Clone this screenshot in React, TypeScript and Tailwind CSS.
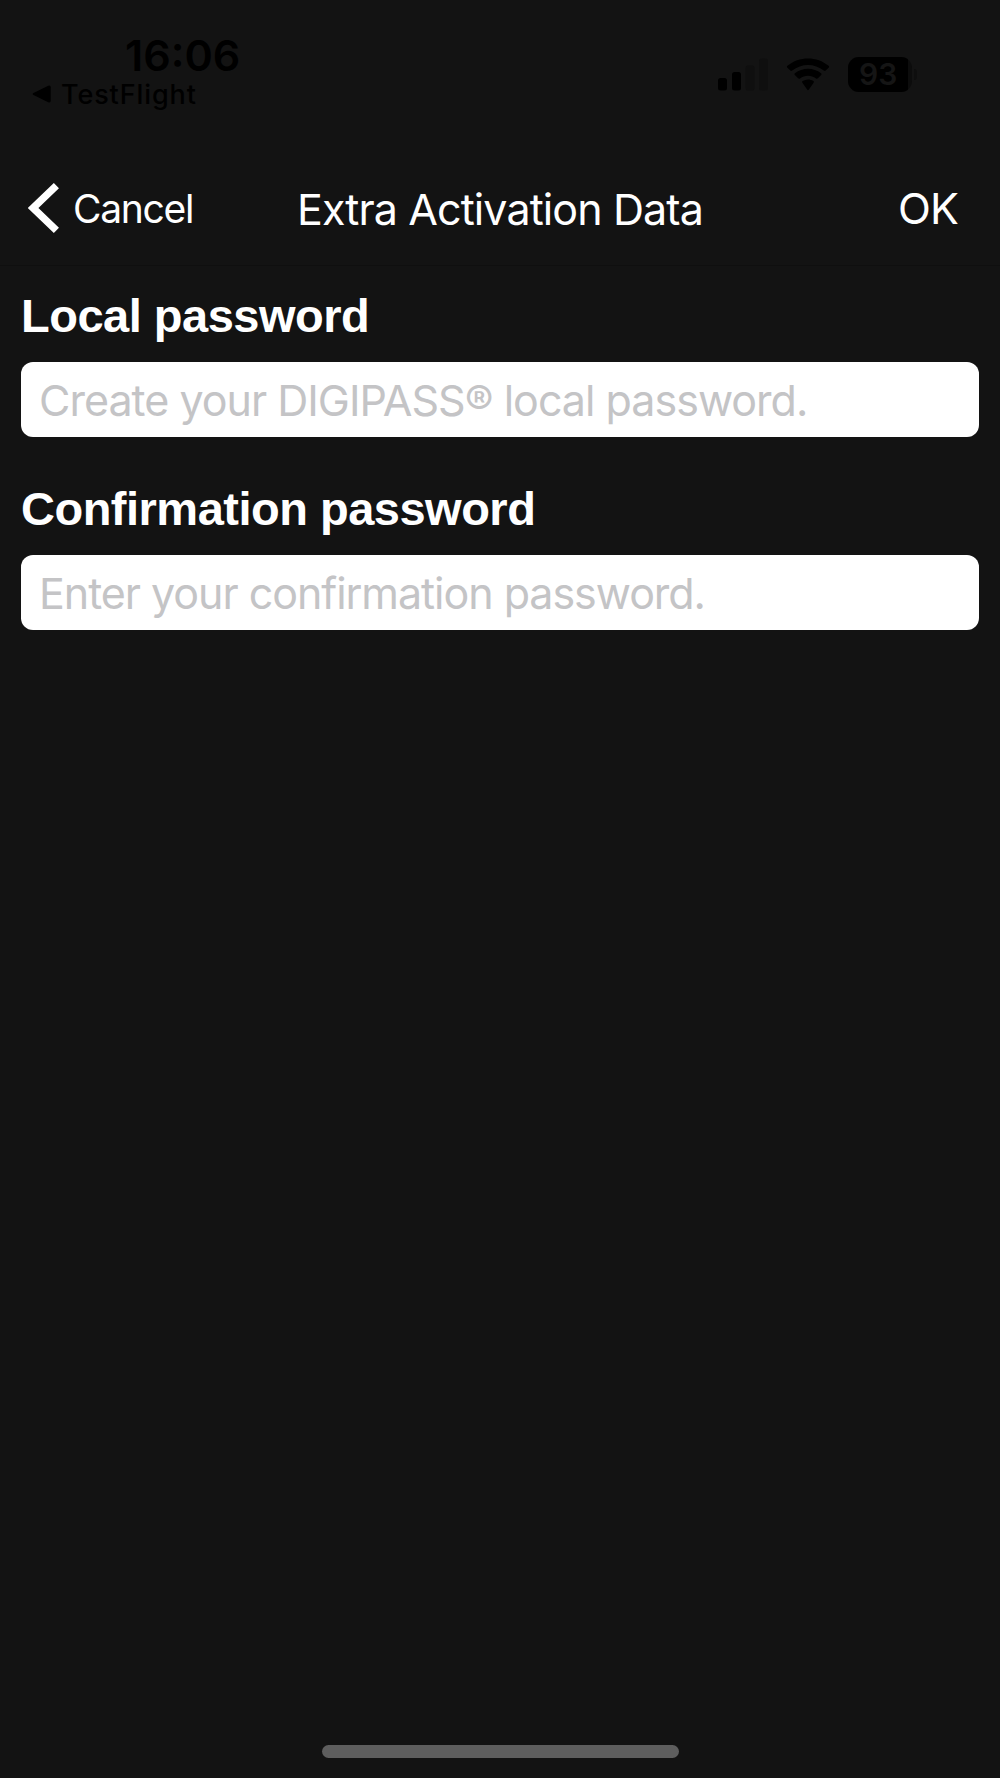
function StatusBar() {
  return (
    <div className="flex h-[150px] items-start justify-between pl-8 pr-[83px] text-black">
      <div className="pt-[33px]">
        <div className="ml-[93px] text-[43px] leading-[44px] font-semibold">16:06</div>
        <div className="mt-px flex h-8 items-center gap-[10px]">
          <svg width="19" height="18" viewBox="0 0 19 18" fill="currentColor" aria-hidden="true">
            <path d="M1.5 8 16.2.7Q18.7-.2 18.7 2.2V15.8Q18.7 18.2 16.2 17.3L1.5 10Q-.2 9 1.5 8Z" />
          </svg>
          <span className="pt-px text-[27px] leading-8 font-[450] tracking-[0.9px]">TestFlight</span>
        </div>
      </div>
      <div className="flex pt-[57px]">
        <svg width="52" height="35" viewBox="0 0 52 35" aria-hidden="true">
          <rect x="1" y="21" width="9" height="12.5" rx="2.5" />
          <rect x="15" y="15" width="9" height="18.5" rx="2.5" />
          <rect x="28.5" y="8.5" width="9" height="25" rx="2.5" fill="#0f0f0f" />
          <rect x="42" y="1.5" width="9" height="32" rx="2.5" fill="#0f0f0f" />
        </svg>
        <svg className="ml-[17px]" width="44" height="35" viewBox="0 0 44 35" aria-hidden="true">
          <path d="M1.4 10.7Q.4 9.7 1.4 8.8C13-1 31-1 42.6 8.8Q43.6 9.7 42.6 10.7L39.7 13.6Q38.8 14.5 37.8 13.6C28.5 6 15.5 6 6.2 13.6Q5.2 14.5 4.3 13.6Z" />
          <path d="M8.8 18.1Q7.9 17.1 8.9 16.3C16.5 10.3 27.5 10.3 35.1 16.3Q36.1 17.1 35.2 18.1L31.9 21.3Q31 22.1 30 21.4C25 17.8 19 17.8 14 21.4Q13 22.1 12.1 21.3Z" />
          <path d="M16.4 25.7Q15.5 24.7 16.6 24C20 22 24 22 27.4 24Q28.5 24.7 27.6 25.7L22.9 32.6Q22 33.7 21.1 32.6Z" />
        </svg>
        <div className="ml-[18px] flex items-center gap-[2px]">
          <div className="flex h-[35px] w-16 items-center overflow-hidden rounded-[11px] bg-[#0c0c0c]">
            <div className="h-full w-[60px] bg-black pl-[11px] text-[30px] leading-[35px] font-semibold text-[#151515]">93</div>
          </div>
          <div className="h-[11px] w-[3px] rounded-r-full bg-[#0e0e0e]" />
        </div>
      </div>
    </div>
  );
}

function Header() {
  return (
    <header className="grid h-[116px] grid-cols-[297px_1fr_auto] items-center border-b border-[#0f0f0f] pr-[42px] text-white">
      <button type="button" className="flex items-center pl-7">
        <svg width="32" height="52" viewBox="0 0 32 52" aria-hidden="true">
          <path d="M28.4 3.6 5 26 28.4 48.4" fill="none" stroke="currentColor" strokeWidth="7.4" />
        </svg>
        <span className="ml-[13px] pt-[2px] text-[39px] leading-[48px] tracking-[-1.28px]">Cancel</span>
      </button>
      <h1 className="pt-[2px] text-[43px] leading-[52px] tracking-[-0.9px] whitespace-nowrap">Extra Activation Data</h1>
      <button type="button" className="text-[43px] leading-[52px] tracking-[-0.9px]">OK</button>
    </header>
  );
}

function PasswordField({ label, placeholder, inputClass }: { label: string; placeholder: string; inputClass: string }) {
  return (
    <label className="block">
      <span className="block h-12 pt-px font-['Liberation_Sans',sans-serif] text-[47px] leading-[48px] font-bold tracking-[-0.5px] text-white">
        {label}
      </span>
      <input
        type="text"
        placeholder={placeholder}
        className={`mt-[23px] block h-[75px] w-full rounded-xl bg-white pr-4 pl-[18px] text-[43px] text-black outline-none placeholder:text-[#c4c4c6] ${inputClass}`}
      />
    </label>
  );
}

export default function App() {
  return (
    <div className="flex h-[1778px] w-[1000px] flex-col overflow-hidden bg-[#131313] font-['Inter',sans-serif]">
      <StatusBar />
      <Header />
      <main className="flex flex-1 flex-col gap-[47px] pt-[25px] pr-[21px] pl-[21px]">
        <PasswordField label="Local password" placeholder="Create your DIGIPASS® local password." inputClass="tracking-[-0.99px]" />
        <PasswordField label="Confirmation password" placeholder="Enter your confirmation password." inputClass="tracking-[-1.04px]" />
      </main>
      <div className="mb-5 ml-[322px] h-[13px] w-[357px] rounded-full bg-[#5e5e5e]" />
    </div>
  );
}
